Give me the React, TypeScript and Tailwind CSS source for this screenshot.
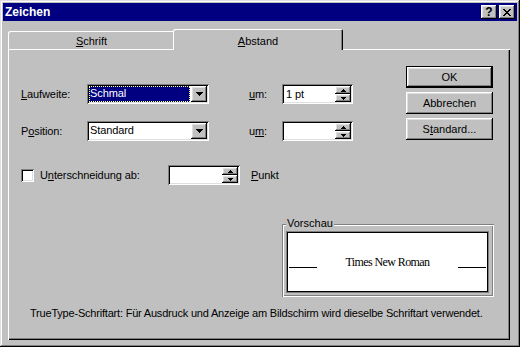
import React from 'react'

const raised =
  'shadow-[inset_-1px_-1px_#000,inset_1px_1px_#fff,inset_-2px_-2px_#808080,inset_2px_2px_#dfdfdf]'
const sunken =
  'shadow-[inset_1px_1px_#808080,inset_-1px_-1px_#fff,inset_2px_2px_#000,inset_-2px_-2px_#dfdfdf]'

function Arrow({ up, w, h }: { up?: boolean; w: number; h: number }) {
  const pts = up ? `0,${h} ${w},${h} ${w / 2},0` : `0,0 ${w},0 ${w / 2},${h}`
  return (
    <svg width={w} height={h} viewBox={`0 0 ${w} ${h}`} shapeRendering="crispEdges">
      <polygon points={pts} fill="#000" />
    </svg>
  )
}

function Combo({ value, selected }: { value: string; selected?: boolean }) {
  return (
    <div className={`flex h-[20px] w-[122px] bg-white p-[2px] ${sunken}`}>
      <div className="flex flex-1 pr-px">
        {selected ? (
          <div className="flex-1 bg-[#000080] pl-px leading-[14px] text-white outline outline-1 -outline-offset-1 outline-dotted outline-[#ffff80]">
            {value}
          </div>
        ) : (
          <div className="flex-1 pl-px leading-[15px]">{value}</div>
        )}
      </div>
      <div className={`flex h-[16px] w-[16px] items-center justify-center bg-[#c0c0c0] ${raised}`}>
        <Arrow w={7} h={4} />
      </div>
    </div>
  )
}

function Spin({ value, width }: { value?: string; width: string }) {
  return (
    <div className={`flex h-[20px] ${width} bg-white p-[2px] ${sunken}`}>
      <div className="flex-1 pl-[2px] leading-[16px]">{value}</div>
      <div className="flex w-[16px] flex-col">
        <div className={`flex h-[8px] items-center justify-center bg-[#c0c0c0] ${raised}`}>
          <Arrow up w={5} h={3} />
        </div>
        <div className={`flex h-[8px] items-center justify-center bg-[#c0c0c0] ${raised}`}>
          <Arrow w={5} h={3} />
        </div>
      </div>
    </div>
  )
}

function Button({ children, primary }: { children: React.ReactNode; primary?: boolean }) {
  return (
    <div
      className={`flex h-[22px] w-[87px] items-center justify-center bg-[#c0c0c0] ${
        primary
          ? 'shadow-[inset_0_0_0_1px_#000,inset_-2px_-2px_#000,inset_2px_2px_#fff,inset_-3px_-3px_#808080,inset_3px_3px_#dfdfdf]'
          : raised
      }`}
    >
      {children}
    </div>
  )
}

export default function App() {
  return (
    <div
      className="flex h-[347px] w-[520px] flex-col bg-[#c0c0c0] p-[3px] text-[11px] text-black shadow-[inset_-1px_-1px_#000,inset_1px_1px_#dfdfdf,inset_-2px_-2px_#808080,inset_2px_2px_#fff]"
      style={{ fontFamily: '"Liberation Sans", Arial, sans-serif' }}
    >
      {/* Titelleiste */}
      <div className="flex h-[18px] items-center bg-[#000080] pl-[2px] pr-[2px]">
        <span className="flex-1 text-[12px] font-bold leading-[18px] text-white">Zeichen</span>
        <div className={`flex h-[14px] w-[16px] items-center justify-center bg-[#c0c0c0] text-[12px] font-bold leading-none ${raised}`}>
          ?
        </div>
        <div className={`ml-[2px] flex h-[14px] w-[16px] items-center justify-center bg-[#c0c0c0] ${raised}`}>
          <svg width="8" height="7" viewBox="0 0 8 7" shapeRendering="crispEdges">
            <path d="M0 0h2v1h-2zM6 0h2v1h-2zM1 1h2v1h-2zM5 1h2v1h-2zM2 2h4v1h-4zM3 3h2v1h-2zM2 4h4v1h-4zM1 5h2v1h-2zM5 5h2v1h-2zM0 6h2v1h-2zM6 6h2v1h-2z" fill="#000" />
          </svg>
        </div>
      </div>

      <div className="px-[5px] pt-[8px]">
        {/* Reiter */}
        <div className="flex h-[20px] items-start">
          <div className="mt-[2px] flex h-[18px] w-[167px] items-center justify-center rounded-t-[2px] pt-[3px] shadow-[inset_1px_1px_#fff,inset_-1px_0_#000,inset_-2px_0_#808080]">
            <span>
              <u>S</u>chrift
            </span>
          </div>
          <div className="relative z-10 -ml-[2px] flex h-[21px] w-[170px] items-center justify-center rounded-t-[2px] bg-[#c0c0c0] pt-[4px] shadow-[inset_1px_1px_#fff,inset_-1px_0_#000,inset_-2px_0_#808080]">
            <span>
              <u>A</u>bstand
            </span>
          </div>
        </div>

        {/* Registerkarte */}
        <div className="h-[291px] w-[502px] pl-[13px] shadow-[inset_1px_1px_#fff,inset_-1px_-1px_#000,inset_-2px_-2px_#808080]">
          <div className="flex">
            <div className="w-[385px] pt-[35px] tracking-[-0.1px]">
              <div className="flex h-[20px] items-center">
                <span className="w-[66px]">
                  <u>L</u>aufweite:
                </span>
                <Combo value="Schmal" selected />
                <span className="ml-[40px] w-[33px]">
                  <u>u</u>m:
                </span>
                <Spin value="1 pt" width="w-[71px]" />
              </div>
              <div className="mt-[17px] flex h-[20px] items-center">
                <span className="w-[66px]">
                  P<u>o</u>sition:
                </span>
                <Combo value="Standard" />
                <span className="ml-[40px] w-[33px]">
                  u<u>m</u>:
                </span>
                <Spin width="w-[71px]" />
              </div>
              <div className="mt-[24px] flex h-[20px] items-center">
                <div className={`h-[13px] w-[13px] bg-white ${sunken}`} />
                <span className="ml-[6px] w-[128px]">
                  U<u>n</u>terschneidung ab:
                </span>
                <Spin width="w-[72px]" />
                <span className="ml-[11px]">
                  <u>P</u>unkt
                </span>
              </div>
            </div>
            <div className="flex flex-col gap-[4px] pt-[17px]">
              <Button primary>OK</Button>
              <Button>Abbrechen</Button>
              <Button>
                <span>
                  S<u>t</u>andard...
                </span>
              </Button>
            </div>
          </div>

          {/* Vorschau */}
          <div className="relative ml-[261px] mt-[39px] h-[73px] w-[212px] pl-[5px] pt-[8px] shadow-[inset_1px_1px_#808080,inset_-1px_-1px_#fff,inset_2px_2px_#fff,inset_-2px_-2px_#808080]">
            <span className="absolute left-[4px] top-[-7px] bg-[#c0c0c0] px-px leading-[13px]">Vorschau</span>
            <div className="h-[60px] w-[201px] border border-black bg-white shadow-[0_0_0_1px_#808080]">
              <div className="mt-[24px] flex h-[11px] items-end px-px">
                <div className="h-px w-[28px] bg-black" />
                <span
                  className="flex-1 text-center text-[12px] leading-[11px] tracking-[-0.6px]"
                  style={{ fontFamily: '"Liberation Serif", "Times New Roman", serif' }}
                >
                  Times New Roman
                </span>
                <div className="h-px w-[28px] bg-black" />
              </div>
            </div>
          </div>

          <p className="ml-[9px] mt-[10px] leading-[13px] tracking-[-0.2px]">
            TrueType-Schriftart: Für Ausdruck und Anzeige am Bildschirm wird dieselbe Schriftart verwendet.
          </p>
        </div>
      </div>
    </div>
  )
}
